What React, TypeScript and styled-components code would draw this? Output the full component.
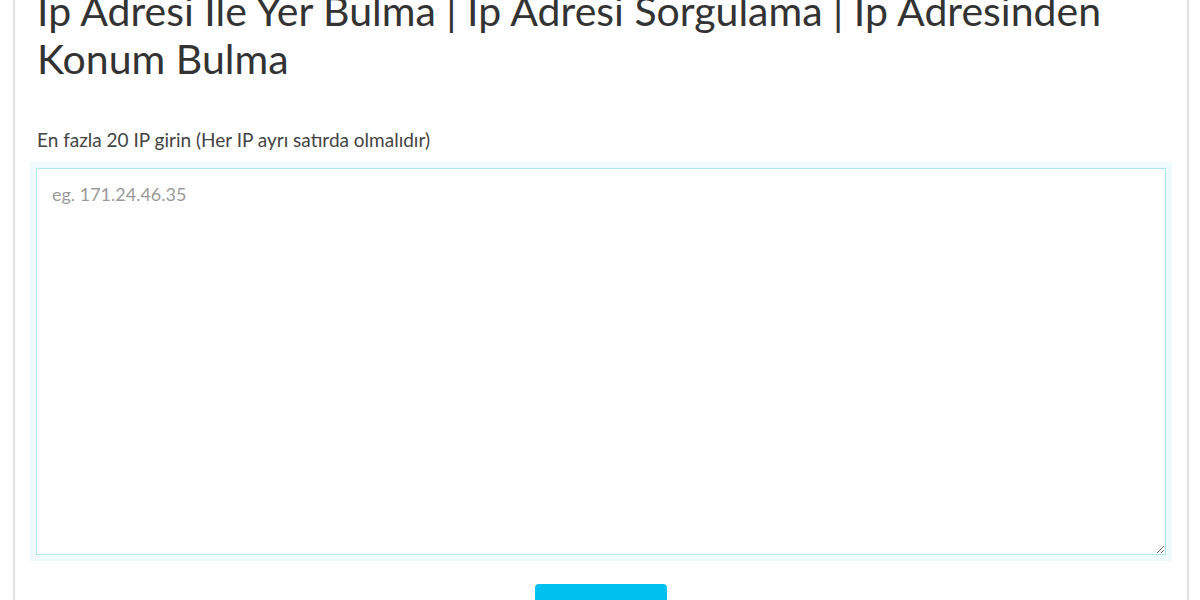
import React from "react";
import styled, { createGlobalStyle } from "styled-components";

const GlobalStyle = createGlobalStyle`
  html, body {
    margin: 0;
    padding: 0;
    background: #fff;
    overflow: hidden;
  }
  body {
    font-family: "Lato", "Open Sans", sans-serif;
    color: #333;
  }
`;

const Page = styled.div`
  padding: 0 11px 0 13px;
  margin-top: -13px;
`;

const Card = styled.section`
  border-left: 2px solid #e2e2e2;
  border-right: 2px solid #e2e2e2;
  background: #fff;
  padding: 0 21px 40px 21px;
`;

const Title = styled.h1`
  margin: 0 0 0 1px;
  font-size: 41px;
  line-height: 48px;
  font-weight: 400;
  color: #333;
`;

const Form = styled.form`
  margin-top: 45px;
  display: flex;
  flex-direction: column;
`;

const Label = styled.label`
  font-size: 19px;
  line-height: 24px;
  color: #444;
  margin: 0 0 16px 1px;
`;

const Area = styled.textarea`
  box-sizing: border-box;
  width: 100%;
  height: 387px;
  padding: 13px 15px;
  border: 1px solid #b0e3f3;
  box-shadow: 0 0 0 6px #effafe;
  border-radius: 0;
  outline: none;
  font-family: "Lato", "Open Sans", sans-serif;
  font-size: 18px;
  line-height: 24px;
  color: #333;
  &::placeholder {
    color: #9a9a9a;
  }
`;

const Actions = styled.div`
  display: flex;
  justify-content: center;
  margin-top: 29px;
`;

const Button = styled.button`
  width: 132px;
  height: 62px;
  border: none;
  border-radius: 4px;
  background: #00c0ef;
  color: #fff;
  font-family: "Lato", sans-serif;
  font-size: 18px;
`;

export default function App() {
  return (
    <>
      <GlobalStyle />
      <Page>
        <Card>
          <Title>
            Ip Adresi İle Yer Bulma | Ip Adresi Sorgulama | Ip Adresinden Konum Bulma
          </Title>
          <Form onSubmit={(e) => e.preventDefault()}>
            <Label htmlFor="ips">En fazla 20 IP girin (Her IP ayrı satırda olmalıdır)</Label>
            <Area id="ips" placeholder="eg. 171.24.46.35" />
            <Actions>
              <Button type="submit">Sorgula</Button>
            </Actions>
          </Form>
        </Card>
      </Page>
    </>
  );
}
